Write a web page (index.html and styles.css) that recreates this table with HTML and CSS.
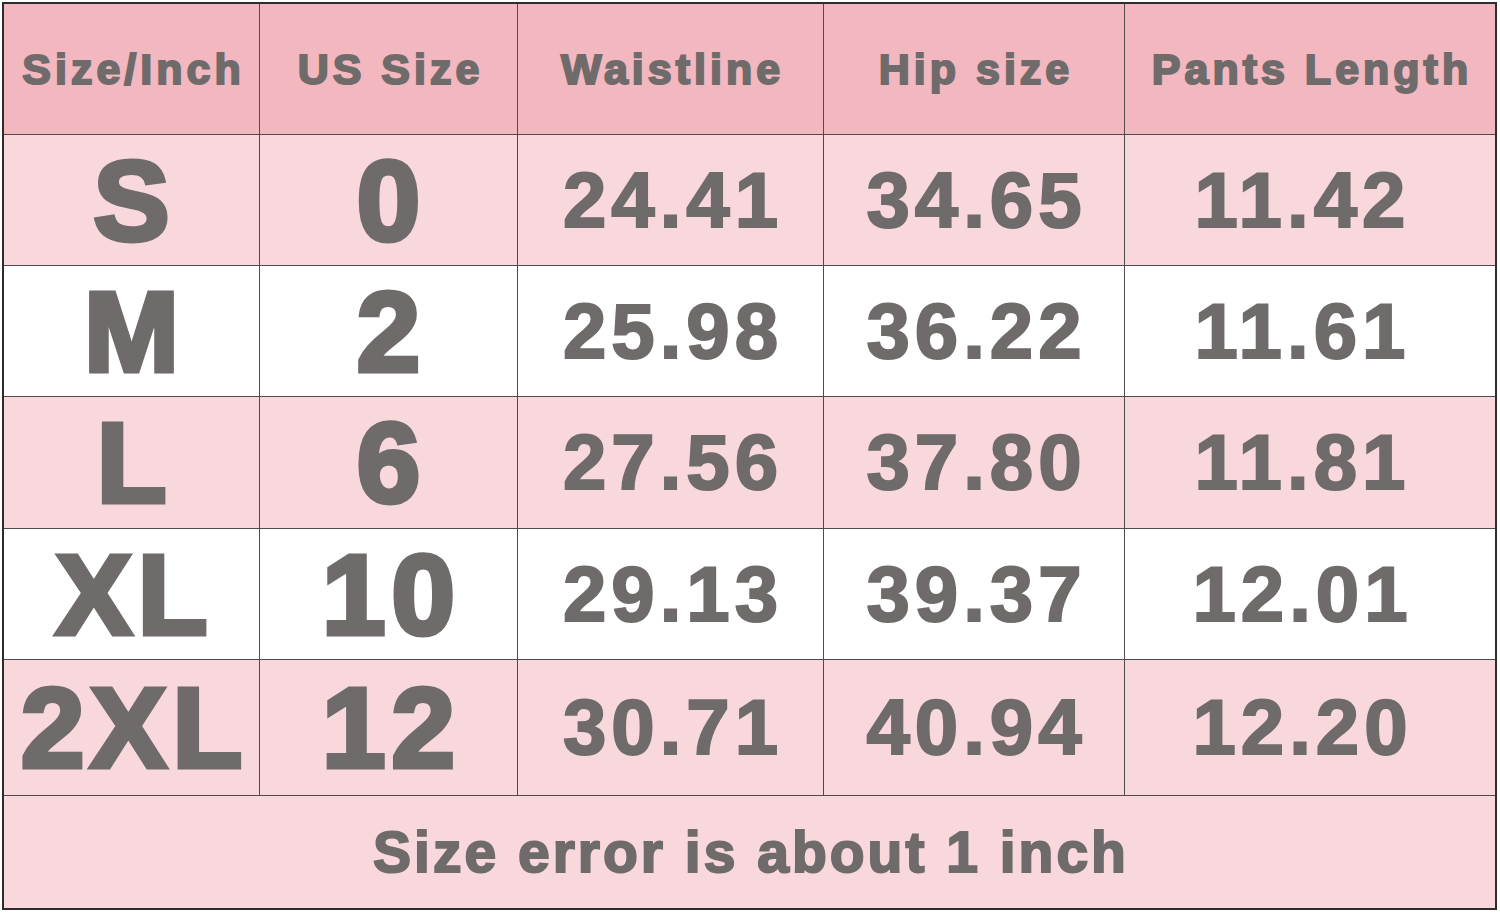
FILE: index.html
```html
<!DOCTYPE html>
<html>
<head>
<meta charset="utf-8">
<link rel="stylesheet" href="styles.css">
</head>
<body>
<div class="chart">
  <div class="cell head">Size/Inch</div>
  <div class="cell head">US Size</div>
  <div class="cell head">Waistline</div>
  <div class="cell head">Hip size</div>
  <div class="cell head">Pants Length</div>

  <div class="cell pink big">S</div>
  <div class="cell pink big">0</div>
  <div class="cell pink num">24.41</div>
  <div class="cell pink num">34.65</div>
  <div class="cell pink num last">11.42</div>

  <div class="cell white big">M</div>
  <div class="cell white big">2</div>
  <div class="cell white num">25.98</div>
  <div class="cell white num">36.22</div>
  <div class="cell white num last">11.61</div>

  <div class="cell pink big">L</div>
  <div class="cell pink big">6</div>
  <div class="cell pink num">27.56</div>
  <div class="cell pink num">37.80</div>
  <div class="cell pink num last">11.81</div>

  <div class="cell white big">XL</div>
  <div class="cell white big">10</div>
  <div class="cell white num">29.13</div>
  <div class="cell white num">39.37</div>
  <div class="cell white num last">12.01</div>

  <div class="cell pink big">2XL</div>
  <div class="cell pink big">12</div>
  <div class="cell pink num">30.71</div>
  <div class="cell pink num">40.94</div>
  <div class="cell pink num last">12.20</div>

  <div class="cell pink foot">Size error is about 1 inch</div>
</div>
</body>
</html>
```

FILE: styles.css
```css
html, body {
  margin: 0;
  padding: 0;
  background: #ffffff;
}

body {
  padding: 2px 0 0 2px;
  font-family: "Liberation Sans", Arial, sans-serif;
}

.chart {
  width: 1491px;
  display: grid;
  grid-template-columns: 255px 257px 305px 300px 370px;
  grid-template-rows: 130px 130px 130px 131px 130px 135px 112px;
  gap: 1px;
  background: #4f4b4c;
  border: 2px solid #2f2c2d;
}

.cell {
  display: flex;
  align-items: center;
  justify-content: center;
  color: #6f6b6b;
  -webkit-text-stroke-color: #6f6b6b;
  font-weight: 700;
  white-space: nowrap;
}

.head {
  background: #f3b7bf;
  font-size: 43px;
  letter-spacing: 4px;
  text-indent: 4px;
  -webkit-text-stroke-width: 2px;
}

.pink {
  background: #f9d8dd;
}

.white {
  background: #ffffff;
}

.big {
  font-size: 114px;
  letter-spacing: 6px;
  text-indent: 6px;
  -webkit-text-stroke-width: 5px;
}

.num {
  font-size: 78px;
  letter-spacing: 5px;
  text-indent: 5px;
  -webkit-text-stroke-width: 2px;
}

.last {
  padding-right: 20px;
}

.foot {
  grid-column: 1 / -1;
  font-size: 57px;
  letter-spacing: 3px;
  text-indent: 3px;
  -webkit-text-stroke-width: 2px;
}
```
